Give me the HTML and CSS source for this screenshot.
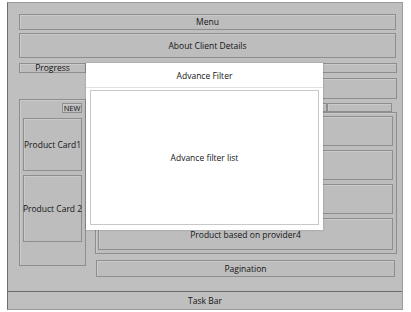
FILE: index.html
```html
<!DOCTYPE html>
<html lang="en">
<head>
    <meta charset="UTF-8">
    <meta name="viewport" content="width=device-width, initial-scale=1.0">
    <title>Client Products - Wireframe</title>
    <link rel="stylesheet" href="styles.css">
</head>
<body>
    <div class="frame">
        <div class="content">
            <div class="box menu">Menu</div>
            <div class="box about">About Client Details</div>
            <div class="progress-row">
                <div class="box progress">Progress</div>
                <div class="box progress-track"></div>
            </div>
            <div class="search-row">
                <div class="box search"></div>
            </div>
            <div class="main">
                <aside class="box side">
                    <div class="badge-row"><span class="box badge">NEW</span></div>
                    <div class="box card card-one">Product Card1</div>
                    <div class="box card card-two">Product Card 2</div>
                </aside>
                <section class="right">
                    <div class="tabs">
                        <div class="box tab"></div>
                        <div class="box tab"></div>
                        <div class="box tab"></div>
                        <div class="box tab"></div>
                    </div>
                    <div class="box providers">
                        <!-- provider 1-3 sit under the filter dialog -->
                        <div class="box provider"></div>
                        <div class="box provider"></div>
                        <div class="box provider"></div>
                        <div class="box provider">Product based on provider4</div>
                    </div>
                    <div class="box pagination">Pagination</div>
                </section>
            </div>
        </div>
        <footer class="taskbar">Task Bar</footer>
    </div>

    <div class="modal">
        <div class="modal-header">Advance Filter</div>
        <div class="modal-body">Advance filter list</div>
    </div>
</body>
</html>
```

FILE: styles.css
```css
body {
    margin: 0;
    background: #fff;
    font-family: 'Open Sans', 'Noto Sans', sans-serif;
    font-size: 8.5px;
    color: #151515;
}
.frame {
    position: relative;
    box-sizing: border-box;
    width: 396px;
    height: 308px;
    margin: 2px 0 0 7px;
    background: #bfbfbf;
    border: 1px solid #9a9a9a;
    border-left-color: #6e6e6e;
    display: flex;
    flex-direction: column;
}
.content {
    box-sizing: border-box;
    height: 288px;
    padding: 11px 5px 0 11px;
}
.box {
    box-sizing: border-box;
    border: 1px solid #8e8e8e;
    box-shadow: inset 1px 1px 0 #cacaca;
    background: #bdbdbd;
    display: flex;
    align-items: center;
    justify-content: center;
    white-space: nowrap;
}
.menu {
    height: 16px;
    margin-right: 1px;
    padding-bottom: 1px;
}
.about {
    height: 25px;
    margin: 3px 1px 0 0;
}
.progress-row {
    display: flex;
    margin-top: 5px;
    height: 10px;
}
.progress {
    width: 67px;
    line-height: 9px;
    padding-bottom: 2px;
}
.progress-track {
    flex: 1;
}
.search-row {
    display: flex;
    justify-content: flex-end;
    margin-top: 5px;
}
.search {
    width: 302px;
    height: 21px;
}
.main {
    display: flex;
    align-items: flex-start;
}
.side {
    width: 67px;
    height: 167px;
    flex-direction: column;
    align-items: stretch;
    justify-content: flex-start;
    padding: 3px 3px 0 3px;
}
.badge-row {
    display: flex;
    justify-content: flex-end;
}
.badge {
    width: 20px;
    height: 10px;
    font-size: 7.5px;
    line-height: 9px;
}
.card {
    margin-top: 5px;
}
.card-one {
    height: 53px;
}
.card-two {
    height: 67px;
    margin-top: 4px;
}
.right {
    flex: 1;
    margin-left: 9px;
    padding-top: 4px;
}
.tabs {
    display: flex;
    justify-content: flex-end;
    height: 9px;
    margin-right: 5px;
}
.tab {
    width: 65px;
}
.providers {
    height: 142px;
    flex-direction: column;
    align-items: stretch;
    justify-content: flex-start;
    gap: 4px;
    padding: 3px 3px 0 2px;
}
.provider {
    height: 30px;
    flex: none;
}
.provider:last-child {
    height: 32px;
}
.pagination {
    height: 17px;
    margin: 6px 2px 0 1px;
}
.taskbar {
    flex: 1;
    border-top: 1px solid #6a6a6a;
    display: flex;
    align-items: center;
    justify-content: center;
}
.modal {
    position: absolute;
    left: 86px;
    top: 63px;
    width: 237px;
    height: 167px;
    box-sizing: border-box;
    background: #fff;
    box-shadow: 0 0 2px rgba(0, 0, 0, 0.25);
    padding: 0 4px 5px 4px;
    display: flex;
    flex-direction: column;
}
.modal-header {
    height: 24px;
    display: flex;
    align-items: center;
    justify-content: center;
    margin: 0 -4px;
    border-bottom: 1px solid #e0e0e0;
}
.modal-body {
    flex: 1;
    margin-top: 2px;
    border: 1px solid #c8c8c8;
    display: flex;
    align-items: center;
    justify-content: center;
}
```
